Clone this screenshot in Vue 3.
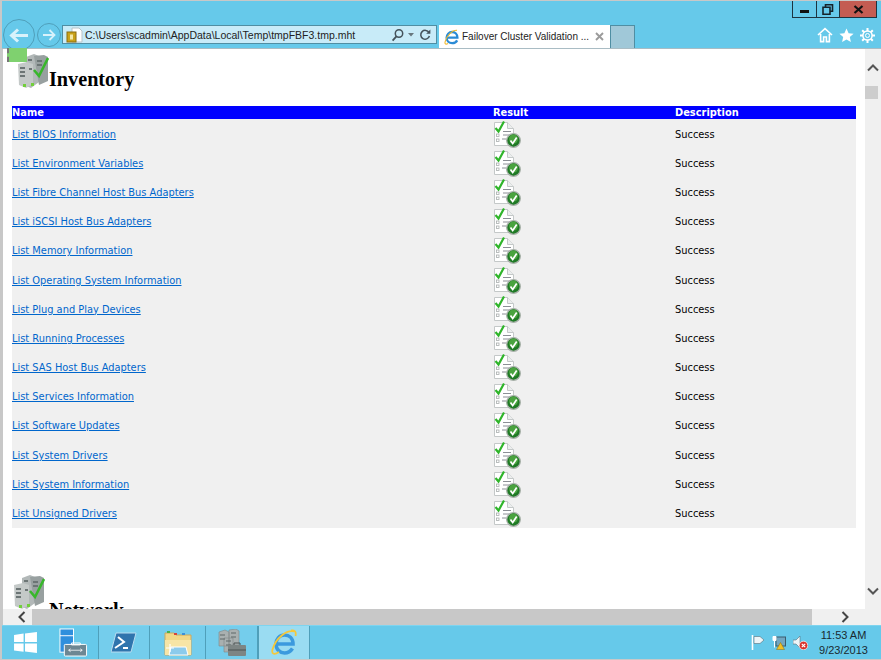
<template>
  <div class="desktop">
    <header class="chrome">
      <div class="window-btns">
        <button class="wbtn wbtn-min"><span class="min-bar"></span></button>
        <button class="wbtn wbtn-max">
          <svg width="12" height="11" viewBox="0 0 12 11"><path d="M3.5 3V.8h7v6.400H8M1 3.200h7v7H1z" fill="none" stroke="#15232a" stroke-width="1.600" /></svg>
        </button>
        <button class="wbtn wbtn-close">
          <svg width="11" height="9" viewBox="0 0 11 9"><path d="M1.500 1l8 7M9.500 1l-8 7" stroke="#111" stroke-width="2.200" /></svg>
        </button>
      </div>
      <div class="toolbar">
        <button class="nav nav-back">
          <svg width="20" height="15" viewBox="0 0 20 15"><path d="M9 1.500L2.500 7.500 9 13.500M3 7.500h16" fill="none" stroke="#d9f2fb" stroke-width="3" /></svg>
        </button>
        <button class="nav nav-fwd">
          <svg width="14" height="12" viewBox="0 0 14 12"><path d="M7.500 1l5 5-5 5M12 6H1" fill="none" stroke="#d9f2fb" stroke-width="1.800" /></svg>
        </button>
        <div class="address">
          <svg class="addr-icon" width="18" height="16" viewBox="0 0 18 16">
            <path d="M6 1h7l3 3v11H6z" fill="#fff" stroke="#b9c4c8" />
            <rect x="1" y="5" width="9" height="10" fill="#c9a21a" stroke="#8a6d10" />
            <rect x="4" y="7.500" width="3" height="5" fill="#f3e7a8" />
          </svg>
          <span class="addr-text">C:\Users\scadmin\AppData\Local\Temp\tmpFBF3.tmp.mht</span>
          <svg class="addr-tools" width="42" height="14" viewBox="0 0 42 14">
            <circle cx="8" cy="5.500" r="3.700" fill="none" stroke="#44525a" stroke-width="1.500" />
            <path d="M5.400 8.400L1.600 12.600" stroke="#44525a" stroke-width="1.800" />
            <path d="M17 5h6l-3 3.400z" fill="#68777e" />
            <path d="M38 4.600a4.400 4.400 0 1 0 .4 3.400" fill="none" stroke="#44525a" stroke-width="1.500" />
            <path d="M39.400 1.600v4.200h-4.200z" fill="#44525a" />
          </svg>
        </div>
        <div class="tab">
          <svg class="tab-ie" width="16" height="16" viewBox="0 0 16 16">
            <path d="M3 8.600h10.400C13.400 5 11 3 8.200 3 5 3 2.600 5.600 2.600 8.800c0 3.300 2.600 5.400 5.600 5.400 2.300 0 4-1 5-2.800" fill="none" stroke="#2a8bd6" stroke-width="2.300" />
            <path d="M13 1.400C9 .6 2.600 6 1 13.200c-.4 2 .9 2.400 3 1.200" fill="none" stroke="#f0b92a" stroke-width="1.100" />
          </svg>
          <span class="tab-title">Failover Cluster Validation ...</span>
          <svg class="tab-x" width="9" height="9" viewBox="0 0 9 9"><path d="M1 1l7 7M8 1L1 8" stroke="#9b9b9b" stroke-width="1.900" /></svg>
        </div>
        <div class="tab-new"></div>
        <div class="right-tools">
          <svg width="16" height="16" viewBox="0 0 16 16"><path d="M1 8l7-6.400L15 8M3.600 7v7.600h3V10h2.800v4.600h3V7" fill="none" stroke="#fff" stroke-width="1.600" /></svg>
          <svg width="15" height="15" viewBox="0 0 15 15"><path d="M7.500.5l2.100 4.700 5 .5-3.800 3.300 1.100 5-4.400-2.600L3.100 14l1.100-5L.4 5.700l5-.5z" fill="#fff" /></svg>
          <svg width="15" height="15" viewBox="0 0 15 15">
            <circle cx="7.500" cy="7.500" r="4.600" fill="none" stroke="#fff" stroke-width="1.500" />
            <circle cx="7.500" cy="7.500" r="2" fill="none" stroke="#fff" />
            <path d="M7.500 0v3M7.500 12v3M0 7.500h3M12 7.500h3M2.200 2.200l2 2M10.800 10.800l2 2M12.800 2.200l-2 2M4.200 10.800l-2 2" stroke="#fff" stroke-width="2" />
          </svg>
        </div>
      </div>
    </header>

    <div class="middle">
      <main class="viewport">
        <section class="inventory">
          <h1 class="section-title">
            <span class="server-wrap">
              <span class="chip"></span>
              <svg class="server" width="32" height="34" viewBox="0 0 32 34"><use href="#server-stack" /></svg>
            </span>
            Inventory
          </h1>
          <div class="results">
            <div class="results-head">
              <span>Name</span>
              <span>Result</span>
              <span>Description</span>
            </div>
            <div v-for="name in tests" :key="name" class="results-row">
              <a href="#" class="test-link">{{ name }}</a>
              <svg class="doc-icon" width="28" height="28" viewBox="0 0 28 28">
                <path d="M1.500 2.500h13l6 6v17h-19z" fill="#fff" stroke="#c4c8c8" />
                <path d="M14.500 2.500v6h6" fill="#eceeee" stroke="#c4c8c8" />
                <path d="M2.500 8l3 3.500L11 1.500" fill="none" stroke="#2fb52a" stroke-width="2.200" />
                <path d="M10 11.500h8M10 15h7M9 19h4" stroke="#8c8f96" />
                <rect x="3.500" y="14" width="2.500" height="2.500" fill="#fff" stroke="#a9adad" stroke-width=".8" />
                <rect x="3.500" y="19" width="2.500" height="2.500" fill="#fff" stroke="#a9adad" stroke-width=".8" />
                <circle cx="20.500" cy="20.500" r="6.800" fill="#1f7a25" stroke="#a7b0a8" stroke-width="1.300" />
                <circle cx="20.500" cy="19" r="4.500" fill="#4aa33f" />
                <path d="M17.500 20.500l2.200 3 4-6" fill="none" stroke="#fff" stroke-width="1.700" />
              </svg>
              <span class="test-desc">Success</span>
            </div>
          </div>
        </section>
        <section class="network">
          <h1 class="section-title section-title-net">
            <svg class="server" width="32" height="34" viewBox="0 0 32 34"><use href="#server-stack" /></svg>
            <span class="net-text">Network</span>
          </h1>
        </section>
        <svg width="0" height="0" class="defs">
          <defs>
            <g id="server-stack">
              <path d="M9 3l8-3 5 2v26l-8 6-5-2z" fill="#b2b8b8" />
              <path d="M17 2l10-1 4 2v24l-9 4z" fill="#98a0a0" />
              <path d="M1 10l9-2 6 2v20l-7 4-7-3z" fill="#c4c9c8" />
              <path d="M3 13h5v2H3zM3 17h5v2H3zM3 21h5v2H3zM11 5h4v2h-4zM20 6h5v2h-5zM20 10h5v2h-5zM12 14h3v2h-3z" fill="#6c7575" />
              <path d="M6 30h3v3H6zM14 29h3v3h-3z" fill="#71cf3a" />
              <path d="M17 16l5 6L31 4" fill="none" stroke="#38b72b" stroke-width="2.600" />
            </g>
          </defs>
        </svg>
      </main>
      <aside class="vscroll">
        <svg width="12" height="8" viewBox="0 0 12 8"><path d="M1 6.500l5-5 5 5" fill="none" stroke="#555" stroke-width="2" /></svg>
        <div class="vthumb"></div>
        <svg class="vdown" width="12" height="8" viewBox="0 0 12 8"><path d="M1 1.500l5 5 5-5" fill="none" stroke="#555" stroke-width="2" /></svg>
      </aside>
    </div>

    <div class="hscroll">
      <div class="harrow-left">
        <svg width="8" height="12" viewBox="0 0 8 12"><path d="M6.500 1l-5 5 5 5" fill="none" stroke="#444" stroke-width="2" /></svg>
      </div>
      <div class="htrack"></div>
      <div class="harrow-right">
        <svg width="8" height="12" viewBox="0 0 8 12"><path d="M1.500 1l5 5-5 5" fill="none" stroke="#444" stroke-width="2" /></svg>
      </div>
    </div>

    <footer class="taskbar">
      <div class="start">
        <svg width="23" height="21" viewBox="0 0 24 22"><path d="M0 3.200l10-1.500v8.800H0zM11.500 1.500L24 0v10.500H11.500zM0 12h10v8.800L0 19.300zM11.500 12H24v10l-12.500-1.700z" fill="#fff" /></svg>
      </div>
      <div class="task task-server">
        <svg width="29" height="29" viewBox="0 0 30 30">
          <rect x="1" y="1" width="14" height="24" fill="#2f8fdd" stroke="#fff" />
          <path d="M1 8h14" stroke="#fff" />
          <rect x="5.500" y="17" width="23" height="12" rx="1" fill="#6d8793" stroke="#fff" />
          <path d="M13 15.500h9v2h-9z" fill="none" stroke="#fff" />
          <path d="M10 23h14M10 23l2-1.500M10 23l2 1.500M24 23l-2-1.500M24 23l-2 1.500" stroke="#fff" stroke-width=".8" />
        </svg>
      </div>
      <div class="task task-ps">
        <svg width="26" height="22" viewBox="0 0 26 22">
          <path d="M5 1h20l-5 19H0z" fill="#2f74ad" stroke="#b9dcf0" />
          <path d="M7 5l6 5-9 6M12 16h5" fill="none" stroke="#fff" stroke-width="2" />
        </svg>
      </div>
      <div class="task task-folder">
        <svg width="28" height="26" viewBox="0 0 28 26">
          <path d="M1 3h9l2 2h15v20H1z" fill="#f2d887" stroke="#c9a860" />
          <path d="M3 1h3v2H3z" fill="#49b04d" />
          <path d="M10 3h3v2h-3z" fill="#d8433a" />
          <path d="M18 3h3v2h-3z" fill="#3c90d8" />
          <path d="M1 10h26v15H1z" fill="#f7e5a6" />
          <path d="M7 17h15l2 8H5z" fill="#8ccbec" stroke="#fff" />
          <path d="M6 14v8M2 18h8" stroke="#fff" stroke-width="1.200" />
        </svg>
      </div>
      <div class="task task-tools">
        <svg width="30" height="28" viewBox="0 0 30 28">
          <path d="M2 3l6-2 4 2v14H2zM12 1l7-1 3 2v14H12zM7 9h9v14H7z" fill="#a9b0b0" stroke="#7f8888" stroke-width=".6" />
          <path d="M3 6h5M3 10h5M14 4h5M14 8h5M9 12h5M9 16h5" stroke="#5f6868" />
          <rect x="11" y="16" width="18" height="11" rx="1" fill="#7d8584" />
          <path d="M17 16v-2h6v2M11 21h18" fill="none" stroke="#4c5353" />
        </svg>
      </div>
      <div class="task task-ie">
        <svg width="28" height="28" viewBox="0 0 28 28">
          <path d="M6 15h17c0-6-4-9-8.500-9C9.500 6 6 10 6 15c0 5.500 4 9 8.500 9 3.500 0 6-1.500 8-4.500" fill="none" stroke="#3c9ade" stroke-width="3.600" />
          <path d="M24 2.500C17 .5 5.500 9 2.500 20.500c-1 4 1 6 6.500 2.500M21 1.500c3.500-.500 5.500 1 4.500 5.500" fill="none" stroke="#f5c83a" stroke-width="1.800" />
        </svg>
      </div>
      <div class="tray">
        <svg width="14" height="15" viewBox="0 0 14 15"><path d="M1.500 0v15" stroke="#fff" stroke-width="1.600" /><path d="M3 1.500h6l4 3.500-4 3.500H3z" fill="#eef5f8" stroke="#58707c" stroke-width=".6" /></svg>
        <svg width="14" height="15" viewBox="0 0 14 15">
          <rect x="4" y="2" width="9.500" height="9" fill="#71a7c2" stroke="#3a5c6e" />
          <path d="M1 1.500h3v4H1zM2.500 5.500v7" fill="#fff" stroke="#fff" />
          <path d="M8.500 7.500l4 7h-8z" fill="#f2c024" stroke="#8a6d10" stroke-width=".5" />
        </svg>
        <svg width="15" height="15" viewBox="0 0 15 15">
          <path d="M0 5h3l4-4v12l-4-4H0z" fill="#eef5f8" stroke="#58707c" stroke-width=".6" />
          <circle cx="10.500" cy="10.500" r="4.300" fill="#d8322c" stroke="#fff" stroke-width=".7" />
          <path d="M8.800 8.800l3.400 3.400M12.200 8.800l-3.400 3.400" stroke="#fff" stroke-width="1.200" />
        </svg>
      </div>
      <div class="clock">
        <span>11:53 AM</span>
        <span>9/23/2013</span>
      </div>
    </footer>
  </div>
</template>

<script setup>
const tests = [
  "List BIOS Information",
  "List Environment Variables",
  "List Fibre Channel Host Bus Adapters",
  "List iSCSI Host Bus Adapters",
  "List Memory Information",
  "List Operating System Information",
  "List Plug and Play Devices",
  "List Running Processes",
  "List SAS Host Bus Adapters",
  "List Services Information",
  "List Software Updates",
  "List System Drivers",
  "List System Information",
  "List Unsigned Drivers",
];
</script>

<style>
html,
body {
  margin: 0;
  overflow: hidden;
}
</style>

<style scoped>
.desktop {
  width: 881px;
  height: 660px;
  display: flex;
  flex-direction: column;
  overflow: hidden;
  background: #c8c8c8;
  font-family: "Liberation Sans", "Open Sans", sans-serif;
}

.chrome {
  height: 47px;
  flex: none;
  margin-top: 1px;
  margin-left: 2px;
  background: #66c9ea;
  display: flex;
  flex-direction: column;
  box-shadow: 0 1px 0 #a9bcc4;
  position: relative;
  z-index: 1;
}

.window-btns {
  height: 17px;
  align-self: flex-end;
  margin-right: 4px;
  display: flex;
  border: 1px solid #1d3440;
  border-top: none;
  box-sizing: border-box;
  width: 85px;
}

.wbtn {
  padding: 0;
  border: none;
  background: none;
  display: flex;
  align-items: center;
  justify-content: center;
}

.wbtn-min {
  width: 24px;
  border-right: 1px solid #1d3440;
}

.wbtn-max {
  width: 23px;
  border-right: 1px solid #1d3440;
}

.wbtn-close {
  flex: 1;
  background: #c45c52;
}

.min-bar {
  width: 9px;
  height: 3px;
  margin-top: 4px;
  background: #111;
}

.toolbar {
  display: flex;
  align-items: flex-start;
  height: 30px;
}

.nav {
  padding: 0;
  flex: none;
  border: 1px solid #4f9fba;
  border-radius: 50%;
  background: #66c9ea;
  display: flex;
  align-items: center;
  justify-content: center;
}

.nav-back {
  width: 32px;
  height: 32px;
  margin: 1px 0 0 1px;
  position: relative;
  z-index: 1;
}

.nav-fwd {
  width: 24px;
  height: 24px;
  margin: 5px 0 0 2px;
}

.address {
  width: 375px;
  height: 19px;
  box-sizing: border-box;
  margin: 7px 0 0 1px;
  border: 1px solid #4f8ea3;
  background: #c8ebf8;
  display: flex;
  align-items: center;
  padding-left: 3px;
}

.addr-icon {
  flex: none;
}

.addr-text {
  margin-left: 1px;
  font-size: 10.500px;
  color: #222;
  white-space: nowrap;
  flex: 1;
}

.addr-tools {
  flex: none;
  margin-right: 3px;
}

.tab {
  width: 171px;
  height: 23px;
  box-sizing: border-box;
  margin: 7px 0 0 2px;
  padding: 0 6px 0 5px;
  background: #fff;
  display: flex;
  align-items: center;
  gap: 2px;
}

.tab-ie,
.tab-x {
  flex: none;
}

.tab-title {
  flex: 1;
  font-size: 10px;
  color: #222;
  white-space: nowrap;
}

.tab-new {
  width: 25px;
  height: 23px;
  box-sizing: border-box;
  margin-top: 7px;
  background: #a0c8d8;
  border: 1px solid #4f8ea3;
  border-bottom: none;
}

.right-tools {
  margin: 9px 6px 0 auto;
  display: flex;
  align-items: center;
  gap: 6px;
}

.middle {
  height: 561px;
  flex: none;
  display: flex;
  margin-left: 3px;
}

.viewport {
  flex: 1;
  min-width: 0;
  overflow: hidden;
  background: #fff;
}

.section-title {
  margin: 0;
  display: flex;
  align-items: flex-end;
  font-family: "Liberation Serif", serif;
  font-size: 20.200px;
  font-weight: 700;
  line-height: 17px;
  color: #000;
  white-space: nowrap;
}

.inventory .section-title {
  height: 40px;
  margin-left: 3px;
}

.server-wrap {
  width: 43px;
  height: 40px;
  position: relative;
  display: flex;
  align-items: flex-end;
  justify-content: flex-end;
  flex: none;
}

.chip {
  position: absolute;
  left: 1px;
  top: 0;
  width: 20px;
  height: 14px;
  background: #7fd16f;
  border-left: 2px dashed #777;
  box-sizing: border-box;
  z-index: 1;
}

.results {
  margin: 18px 9px 0;
  font-family: "DejaVu Sans", sans-serif;
  font-size: 9.850px;
}

.results-head,
.results-row {
  display: grid;
  grid-template-columns: 481px 182px 1fr;
  align-items: center;
}

.results-head {
  height: 13px;
  background: #0000ff;
  color: #fff;
  font-weight: 700;
}

.results-row {
  height: 29.200px;
  background: #f0f0f0;
  color: #000;
}

.test-link {
  padding-top: 1px;
  color: #0066cc;
  text-decoration: underline;
  white-space: nowrap;
}

.test-desc {
  padding-top: 1px;
}

.doc-icon {
  display: block;
}

.network {
  margin-top: 47px;
  margin-left: 10px;
}

.section-title-net {
  gap: 4px;
  align-items: flex-start;
  height: 60px;
  line-height: 23px;
}

.section-title-net .server {
  flex: none;
}

.net-text {
  padding-top: 24px;
}

.defs {
  position: absolute;
}

.vscroll {
  width: 16px;
  flex: none;
  background: #f0f0f0;
  display: flex;
  flex-direction: column;
  align-items: center;
  padding-top: 16px;
  padding-right: 1px;
  box-sizing: border-box;
}

.vthumb {
  width: 13px;
  height: 13px;
  margin-top: 14px;
  margin-right: 2px;
  background: #cdcdcd;
}

.vdown {
  margin-top: auto;
  margin-bottom: 14px;
}

.hscroll {
  height: 16px;
  flex: none;
  margin-left: 3px;
  display: flex;
  background: #f0f0f0;
}

.harrow-left {
  width: 29px;
  display: flex;
  align-items: center;
  padding-left: 15px;
  box-sizing: border-box;
}

.htrack {
  width: 780px;
  background: #c8c8c8;
}

.harrow-right {
  width: 69px;
  display: flex;
  align-items: center;
  padding-left: 29px;
  box-sizing: border-box;
}

.taskbar {
  height: 33px;
  flex: none;
  margin-left: 2px;
  display: flex;
  align-items: center;
  background: #66c9ea;
  border-top: 1px solid #7ed4ef;
  color: #1a2a30;
}

.start {
  width: 46px;
  display: flex;
  justify-content: center;
  box-sizing: border-box;
  flex: none;
}

.task {
  height: 33px;
  display: flex;
  align-items: center;
  justify-content: center;
  box-sizing: border-box;
  flex: none;
  border-right: 1px solid #4f9fba;
}

.task-server {
  width: 51px;
}

.task-ps {
  width: 51px;
  background: #74cdec;
}

.task-folder {
  width: 56px;
  background: #74cdec;
}

.task-tools {
  width: 52px;
  background: #74cdec;
}

.task-ie {
  width: 52px;
  background: #9adcf2;
  border-left: 1px solid #4f9fba;
}

.tray {
  margin-left: auto;
  margin-right: -2px;
  display: flex;
  align-items: center;
  gap: 7px;
}

.clock {
  width: 75px;
  display: flex;
  flex-direction: column;
  align-items: center;
  font-size: 11px;
  line-height: 15px;
}
</style>
